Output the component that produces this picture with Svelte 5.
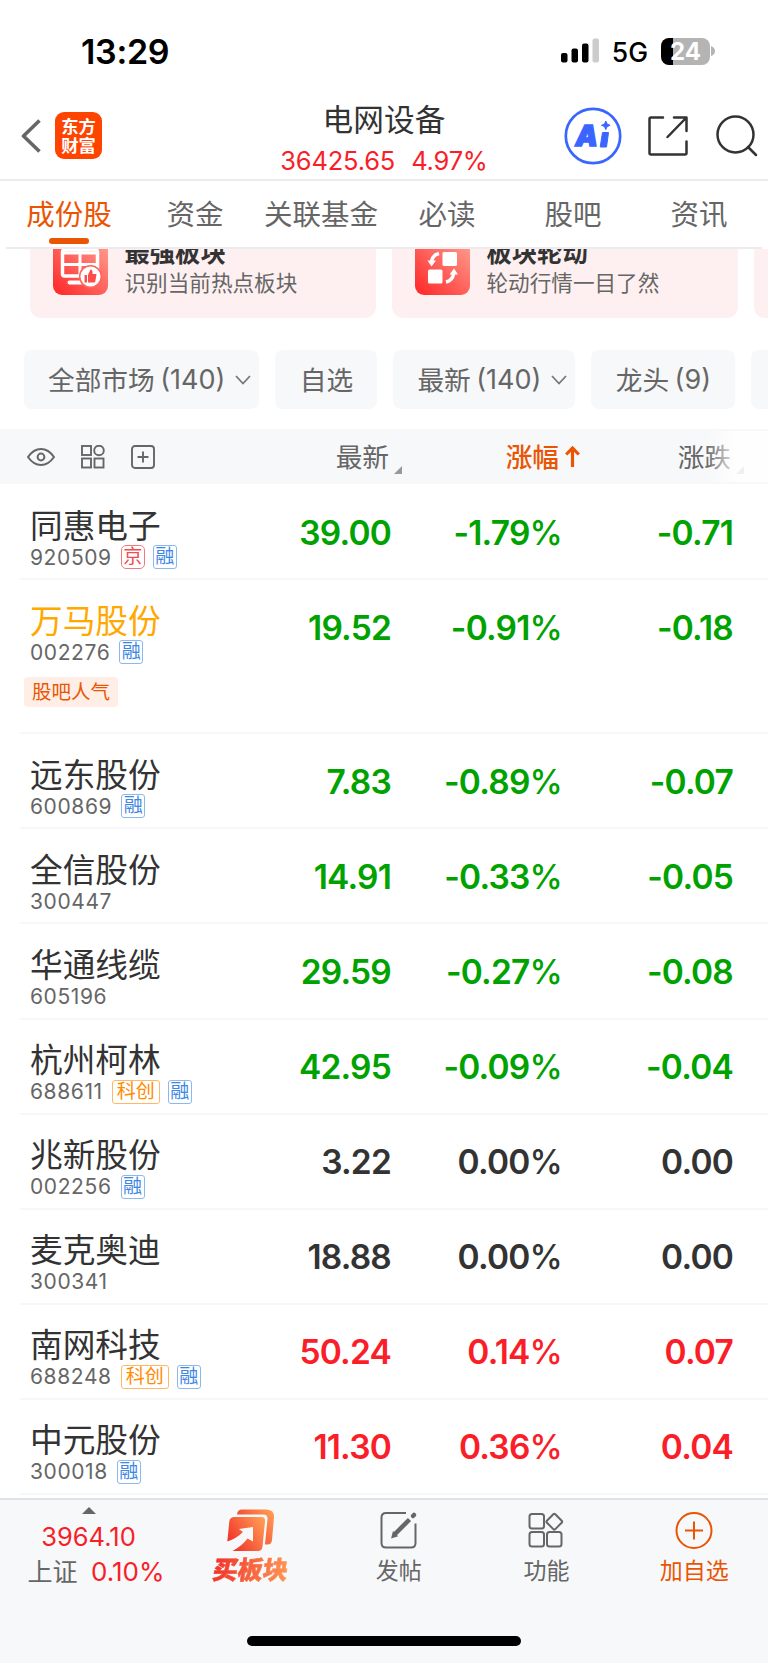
<script lang="ts">
	type Tag = { text: string; kind: 'blue' | 'red' | 'orange' };

	interface Stock {
		name: string;
		code: string;
		price: string;
		percent: string;
		change: string;
		tags: Tag[];
		hot?: string;
		own?: boolean;
	}

	const rong: Tag = { text: '融', kind: 'blue' };
	const jing: Tag = { text: '京', kind: 'red' };
	const kechuang: Tag = { text: '科创', kind: 'orange' };

	const tabs = ['成份股', '资金', '关联基金', '必读', '股吧', '资讯'];
	let activeTab = $state('成份股');

	const filters = [
		{ name: '全部市场', count: '(140)', menu: true },
		{ name: '自选', count: '', menu: false },
		{ name: '最新', count: '(140)', menu: true },
		{ name: '龙头', count: '(9)', menu: false }
	];

	const stocks: Stock[] = [
		{ name: '同惠电子', code: '920509', price: '39.00', percent: '-1.79', change: '-0.71', tags: [jing, rong] },
		{ name: '万马股份', code: '002276', price: '19.52', percent: '-0.91', change: '-0.18', tags: [rong], hot: '股吧人气', own: true },
		{ name: '远东股份', code: '600869', price: '7.83', percent: '-0.89', change: '-0.07', tags: [rong] },
		{ name: '全信股份', code: '300447', price: '14.91', percent: '-0.33', change: '-0.05', tags: [] },
		{ name: '华通线缆', code: '605196', price: '29.59', percent: '-0.27', change: '-0.08', tags: [] },
		{ name: '杭州柯林', code: '688611', price: '42.95', percent: '-0.09', change: '-0.04', tags: [kechuang, rong] },
		{ name: '兆新股份', code: '002256', price: '3.22', percent: '0.00', change: '0.00', tags: [rong] },
		{ name: '麦克奥迪', code: '300341', price: '18.88', percent: '0.00', change: '0.00', tags: [] },
		{ name: '南网科技', code: '688248', price: '50.24', percent: '0.14', change: '0.07', tags: [kechuang, rong] },
		{ name: '中元股份', code: '300018', price: '11.30', percent: '0.36', change: '0.04', tags: [rong] }
	];

	// 涨红跌绿
	function trend(change: string) {
		const value = parseFloat(change);
		if (value > 0) return 'up';
		if (value < 0) return 'down';
		return 'flat';
	}
</script>

<div class="screen">
	<div class="status">
		<span class="time">13:29</span>
		<svg class="signal" width="39" height="26" viewBox="0 0 39 26">
			<rect x="0" y="15" width="6.5" height="9.5" rx="2" />
			<rect x="10.5" y="10.5" width="6.5" height="14" rx="2" />
			<rect x="21" y="5.5" width="6.5" height="19" rx="2" />
			<rect x="31.5" y="0.5" width="6.5" height="24" rx="2" fill="#ccc" />
		</svg>
		<span class="network">5G</span>
		<span class="battery">24</span>
		<svg width="5" height="10" viewBox="0 0 5 10"><path d="M1 0q4 1.5 4 5t-4 5z" fill="#b4b4b4" /></svg>
	</div>

	<header class="nav">
		<div class="nav-left">
			<svg width="20" height="36" viewBox="0 0 20 36" fill="none" stroke="#666" stroke-width="3.6">
				<path d="M18.5 2.5L2.5 18l16 15.5" stroke-linejoin="round" />
			</svg>
			<span class="brand">东方<br />财富</span>
		</div>
		<div class="nav-title">
			<h1>电网设备</h1>
			<p><span>36425.65</span><span>4.97%</span></p>
		</div>
		<div class="nav-icons">
			<svg width="58" height="58" viewBox="0 0 58 58">
				<circle cx="29" cy="29" r="27.2" fill="none" stroke="#3a66ff" stroke-width="2.7" />
				<text x="11.500" y="39" class="ai">A</text>
				<path d="M38.5 25.5h6l-2 14.5h-6.300z" fill="#3a66ff" stroke="#3a66ff" stroke-linejoin="round" />
				<path d="M41.8 14l1.3 3 3 1.3-3 1.3-1.3 3-1.3-3-3-1.3 3-1.3z" fill="#3a66ff" stroke="#3a66ff" />
			</svg>
			<svg width="40" height="40" viewBox="0 0 40 40" fill="none" stroke="#333" stroke-width="2.5" stroke-linecap="round" stroke-linejoin="round">
				<path d="M15 1.5H3q-1.5 0-1.5 1.5v34q0 1.500 1.500 1.500h34q1.500 0 1.500-1.500V25.500M26 1.500h12.500V15M38 2L19.500 21" />
			</svg>
			<svg width="42" height="42" viewBox="0 0 42 42" fill="none" stroke="#333" stroke-width="2.5" stroke-linecap="round">
				<circle cx="19.5" cy="19.5" r="18" />
				<path d="M32 32l8 8" />
			</svg>
		</div>
	</header>

	<nav class="tabs">
		{#each tabs as tab}
			<button class:active={tab === activeTab} onclick={() => (activeTab = tab)}>{tab}</button>
		{/each}
	</nav>

	<section class="cards">
		<div class="card">
			<svg width="55" height="55" viewBox="0 0 55 55">
				<defs>
					<linearGradient id="tile" x1="0" y1="1" x2="1" y2="0">
						<stop offset="0.1" stop-color="#fe3130" />
						<stop offset="1" stop-color="#ffa193" />
					</linearGradient>
				</defs>
				<rect width="55" height="55" rx="9" fill="url(#tile)" />
				<rect x="9.5" y="10" width="35" height="26" rx="2" fill="none" stroke="#fff" stroke-width="3.5" />
				<path d="M27 10v26M10 24.5h34M10 13h34" stroke="#fff" stroke-width="3" />
				<path d="M16.5 42.5H28" stroke="#fff" stroke-width="4" stroke-linecap="round" />
				<circle cx="37.5" cy="36.5" r="10.8" fill="#fff" stroke="#ff6560" stroke-width="1.5" />
				<path d="M31.5 35h2.5v7.5h-2.500zM35 35l2.500-5.500q2.500 0 2 4.500h4l-1.200 7.500q-.3 1-1.300 1h-6z" fill="#ff4c48" />
			</svg>
			<div>
				<h2>最强板块</h2>
				<p>识别当前热点板块</p>
			</div>
		</div>
		<div class="card">
			<svg width="55" height="55" viewBox="0 0 55 55">
				<rect width="55" height="55" rx="9" fill="url(#tile)" />
				<rect x="27.5" y="12" width="14.5" height="14" rx="1.5" fill="#fff" />
				<rect x="13" y="29.5" width="14.5" height="14" rx="1.5" fill="#fff" />
				<path d="M24 13.5q-6.5 1.5-7.5 8M31 42q6.5-1.5 7.5-8" fill="none" stroke="#fff" stroke-width="3.5" />
				<path d="M12.5 20.5h8.5l-4.5 6zM34.5 34.5h8.5l-4-6z" fill="#fff" />
			</svg>
			<div>
				<h2>板块轮动</h2>
				<p>轮动行情一目了然</p>
			</div>
		</div>
		<div class="card"></div>
	</section>

	<section class="filters">
		{#each filters as filter}
			<button class="chip" class:menu={filter.menu}>
				<span>{filter.name}</span>
				{#if filter.count}<span class="count">{filter.count}</span>{/if}
				{#if filter.menu}
					<svg width="16" height="10" viewBox="0 0 16 10" fill="none" stroke="#777" stroke-width="1.8">
						<path d="M1 1l7 7.5L15 1" />
					</svg>
				{/if}
			</button>
		{/each}
		<button class="chip" aria-label="更多"></button>
	</section>

	<div class="thead">
		<div class="tools">
			<svg width="28" height="18" viewBox="0 0 28 18" fill="none" stroke="#666" stroke-width="2">
				<path d="M1 9Q6.5 1 14 1t13 8q-5.500 8-13 8T1 9z" stroke-linejoin="round" />
				<circle cx="14" cy="9" r="3.4" />
			</svg>
			<svg width="24" height="24" viewBox="0 0 24 24" fill="none" stroke="#666" stroke-width="1.9">
				<rect x="1" y="1" width="9" height="9" />
				<circle cx="18" cy="5.5" r="4.8" />
				<rect x="1" y="13.5" width="9" height="9" />
				<rect x="13.5" y="13.5" width="9" height="9" />
			</svg>
			<svg width="24" height="24" viewBox="0 0 24 24" fill="none" stroke="#666" stroke-width="1.9">
				<rect x="1" y="1" width="22" height="22" rx="3" />
				<path d="M12 6.5v11M6.500 12h11" />
			</svg>
		</div>
		<span class="th">最新<i class="corner"></i></span>
		<span class="th sorted">
			涨幅
			<svg width="15" height="22" viewBox="0 0 15 22" fill="none" stroke="#ea5504" stroke-width="3.2">
				<path d="M7.5 21V2.5M1.2 8.5L7.5 2l6.300 6.500" />
			</svg>
		</span>
		<span class="th last">涨跌<i class="corner"></i></span>
	</div>

	<main>
		{#each stocks as stock}
			<div class="row" class:tall={stock.hot}>
				<div class="stock">
					<div class="name" class:own={stock.own}>{stock.name}</div>
					<div class="code">
						<span>{stock.code}</span>
						{#each stock.tags as tag}
							<i class="tag {tag.kind}">{tag.text}</i>
						{/each}
					</div>
					{#if stock.hot}<span class="hot">{stock.hot}</span>{/if}
				</div>
				<span class="num {trend(stock.change)}">{stock.price}</span>
				<span class="num {trend(stock.change)}">{stock.percent}<span class="unit">%</span></span>
				<span class="num {trend(stock.change)}">{stock.change}</span>
			</div>
		{/each}
	</main>

	<footer>
		<div class="bar">
			<div class="index">
				<i class="caret"></i>
				<span class="point">3964.10</span>
				<span class="rate">上证<b>0.10%</b></span>
			</div>
			<div class="item">
				<svg width="48" height="43" viewBox="0 0 48 43">
					<defs>
						<linearGradient id="buy" x1="0" y1="0.8" x2="1" y2="0.2">
							<stop offset="0" stop-color="#f02d26" />
							<stop offset="1" stop-color="#ff9a55" />
						</linearGradient>
					</defs>
					<path d="M10 5.5Q10.5.5 15 .5h24q8.500 0 8 8l-2 22.500q-.4 4.500-4.500 4.500h-2.500l2.500-25.500q.3-4.500-4-4.500z" fill="url(#buy)" />
					<path d="M7.5 8h27q4 0 3.500 4.500l-2.500 25q-.5 4.500-4.500 4.500H5.500Q15 37 20.500 29.500l5.500 3V18l-14 2 4 3Q9.500 29.500.300 32.500l2-20Q2.800 8 7.500 8z" fill="url(#buy)" />
				</svg>
				<span class="buy">买板块</span>
			</div>
			<div class="item">
				<svg width="38" height="38" viewBox="0 0 38 38" fill="none" stroke="#666" stroke-width="2">
					<path d="M26 1.5H6Q1.5 1.5 1.5 6v25.500Q1.500 36 6 36h25q4.500 0 4.500-4.500V12" />
					<path d="M15 22.500L29.500 8" stroke-width="4.5" />
					<path d="M12.500 25.500l1-4 2.800 2.800z" fill="#666" />
					<path d="M33 4.500l1-1" stroke-width="4.5" stroke-linecap="round" />
				</svg>
				<span>发帖</span>
			</div>
			<div class="item">
				<svg width="36" height="36" viewBox="0 0 36 36" fill="none" stroke="#666" stroke-width="2" stroke-linejoin="round">
					<rect x="1.5" y="1.5" width="14.5" height="14.5" rx="2.5" />
					<rect x="1.5" y="19.5" width="14.5" height="14.5" rx="2.5" />
					<rect x="19" y="19.5" width="14.5" height="14.5" rx="2.5" />
					<path d="M25.3 1.8q1-1 2 0l6.4 6.4q1 1 0 2l-6.400 6.400q-1 1-2 0l-6.400-6.400q-1-1 0-2z" />
				</svg>
				<span>功能</span>
			</div>
			<div class="item add">
				<svg width="38" height="38" viewBox="0 0 38 38" fill="none" stroke="#ea5504" stroke-width="2">
					<circle cx="19" cy="19" r="17.5" />
					<path d="M19 10v18M10 19h18" />
				</svg>
				<span>加自选</span>
			</div>
		</div>
		<div class="home"></div>
	</footer>
</div>

<style>
	:global(body) {
		background: #fff;
	}

	.screen {
		display: flex;
		flex-direction: column;
		width: 768px;
		height: 1663px;
		overflow: hidden;
		font-family: 'Inter', 'Noto Sans CJK SC', sans-serif;
		color: #333;
	}

	h1,
	h2,
	p {
		margin: 0;
		font-weight: 400;
	}

	button {
		border: 0;
		padding: 0;
		background: none;
		font: inherit;
		color: inherit;
	}

	svg {
		display: block;
		flex: none;
	}

	.status {
		display: flex;
		align-items: center;
		height: 102px;
		padding: 0 53px 0 81px;
		color: #000;
	}

	.time {
		flex: 1;
		font-size: 34px;
		font-weight: 600;
		letter-spacing: -0.3px;
	}

	.network {
		margin: 1px 13px 0 12px;
		font-size: 26.5px;
		font-weight: 500;
		line-height: 30px;
	}

	.battery {
		width: 49px;
		height: 27px;
		border-radius: 8px;
		background: linear-gradient(90deg, #000 12px, #b4b4b4 12px);
		color: #fff;
		font-size: 24px;
		font-weight: 700;
		line-height: 27px;
		text-align: center;
	}

	.nav {
		display: grid;
		grid-template-columns: 240px 1fr 240px;
		height: 77px;
		border-bottom: 2px solid #ececec;
	}

	.nav-left,
	.nav-icons {
		display: flex;
		align-items: center;
		box-sizing: border-box;
		height: 77px;
		padding-bottom: 10px;
	}

	.nav-left {
		gap: 14px;
		padding-left: 21px;
	}

	.brand {
		box-sizing: border-box;
		width: 47px;
		height: 47px;
		padding-top: 5px;
		border-radius: 9px;
		background: #ff4400;
		color: #fff;
		font-size: 17.3px;
		font-weight: 700;
		line-height: 19px;
		text-align: center;
	}

	.nav-title {
		text-align: center;
	}

	.nav-title h1 {
		font-size: 30.7px;
		line-height: 35px;
	}

	.nav-title p {
		display: flex;
		justify-content: center;
		gap: 16px;
		margin-top: 9px;
		color: #f91e28;
		font-size: 25.5px;
		letter-spacing: -0.2px;
		line-height: 30px;
	}

	.nav-icons {
		gap: 26px;
		padding-left: 36px;
	}

	.nav-icons svg:nth-child(2) {
		margin-right: 2px;
	}

	.ai {
		fill: #3a66ff;
		stroke: #3a66ff;
		stroke-width: 1.5px;
		font-size: 28px;
		font-style: italic;
		font-weight: 900;
	}

	.tabs {
		display: grid;
		grid-template-columns: repeat(6, 1fr);
		height: 66px;
		margin: 0 6px;
		border-bottom: 2px solid #ececee;
		color: #666;
		font-size: 28.5px;
	}

	.tabs button {
		position: relative;
		padding-bottom: 3px;
		white-space: nowrap;
	}

	.tabs .active {
		color: #ea5504;
	}

	.tabs .active::after {
		content: '';
		position: absolute;
		left: 43px;
		bottom: 3px;
		width: 40px;
		height: 6px;
		border-radius: 3px;
		background: #ea5504;
	}

	.cards {
		display: flex;
		align-items: flex-end;
		gap: 16px;
		height: 69px;
		padding-left: 30px;
		overflow: hidden;
	}

	.card {
		box-sizing: border-box;
		display: flex;
		flex: none;
		gap: 16.5px;
		width: 346px;
		height: 100px;
		padding: 22px 0 0 23px;
		border-radius: 11px;
		background: #fef0f1;
	}

	.card h2 {
		margin-top: -2px;
		font-size: 25.3px;
		font-weight: 700;
		line-height: 30px;
	}

	.card p {
		margin-top: 1px;
		color: #666;
		font-size: 21.6px;
		line-height: 28px;
	}

	.filters {
		display: flex;
		gap: 16px;
		padding: 32px 0 20px 24px;
		overflow: hidden;
	}

	.chip {
		box-sizing: border-box;
		display: flex;
		flex: none;
		align-items: center;
		height: 59px;
		padding: 0 24.3px;
		border-radius: 8px;
		background: #f7f8fa;
		color: #666;
		font-size: 26.7px;
		line-height: 32px;
	}

	.chip.menu {
		padding: 0 8px 0 24px;
	}

	.chip .count {
		margin-left: 5.5px;
		font-size: 27px;
	}

	.chip svg {
		margin-left: 10px;
	}

	.thead {
		display: grid;
		grid-template-columns: 200px 202px 178px 164px;
		align-items: center;
		position: relative;
		height: 55px;
		background: #f7f8fa;
		color: #666;
		font-size: 26.7px;
		line-height: 32px;
	}

	.thead::after {
		content: '';
		position: absolute;
		inset: 2px 0 2px 706px;
		background: linear-gradient(90deg, #fff0, #fff 30px);
		opacity: 0.85;
	}

	.tools {
		display: flex;
		align-items: center;
		gap: 26px;
		padding-left: 27px;
	}

	.th {
		display: flex;
		align-items: center;
		justify-content: flex-end;
	}

	.sorted {
		gap: 6px;
		color: #ea5504;
		font-weight: 500;
	}

	.corner {
		align-self: flex-end;
		margin: 0 0 -1px 5px;
		border-bottom: 8px solid #999;
		border-left: 8px solid transparent;
	}

	main {
		flex: 1;
		padding-top: 1px;
		overflow: hidden;
	}

	.row {
		box-sizing: border-box;
		display: grid;
		grid-template-columns: 200px 161px 171px 171px;
		height: 95.1px;
		margin-left: 20px;
		padding: 23.500px 0 0 10px;
		border-bottom: 2px solid #f7f7f9;
	}

	.row.tall {
		height: 154.2px;
	}

	.name {
		font-size: 32.7px;
		line-height: 34px;
	}

	.own {
		color: #ffa800;
	}

	.code {
		display: flex;
		align-items: center;
		gap: 8px;
		height: 29px;
		color: #666;
		font-size: 21px;
		letter-spacing: 0.6px;
	}

	.code span {
		margin-right: 1px;
	}

	.tag {
		box-sizing: border-box;
		height: 24px;
		padding: 0 1.5px;
		border: 1.5px solid;
		border-radius: 3px;
		font-size: 19px;
		font-style: normal;
		letter-spacing: 0;
		line-height: 21px;
	}

	.blue {
		border-color: #8db8ef;
		color: #3d87e4;
	}

	.red {
		border-color: #f5797c;
		border-radius: 5px;
		color: #f04d50;
	}

	.orange {
		padding: 0 4px;
		border-color: #ffb866;
		color: #ff8c00;
	}

	.hot {
		display: inline-block;
		margin: 10px 0 0 -6px;
		padding: 0 8px;
		border-radius: 4px;
		background: #feeee6;
		color: #ea5504;
		font-size: 19.5px;
		line-height: 30px;
	}

	.num {
		padding-top: 4px;
		font-size: 33.5px;
		font-weight: 600;
		letter-spacing: -0.8px;
		line-height: 40px;
		text-align: right;
	}

	.unit {
		font-weight: 500;
	}

	.up {
		color: #f91e28;
	}

	.down {
		color: #00a200;
	}

	footer {
		box-sizing: border-box;
		height: 165px;
		border-top: 2px solid #e1e2e5;
		background: #f7f8fa;
	}

	.bar {
		display: grid;
		grid-template-columns: 177px repeat(4, 147.75px);
		height: 136px;
	}

	.index,
	.item {
		display: flex;
		flex-direction: column;
		align-items: center;
		color: #666;
		font-size: 23px;
		line-height: 30px;
	}

	.item svg {
		height: 43px;
		margin: 8.5px 0 4.5px;
	}

	.add {
		color: #ea5504;
	}

	.caret {
		margin: 7px 0 0;
		border: 7px solid transparent;
		border-top: 0;
		border-bottom-color: #666;
	}

	.point {
		margin-top: 8px;
		color: #f91e28;
		font-size: 25.5px;
	}

	.rate {
		margin: 5px 0 0 15px;
		font-size: 25px;
	}

	.rate b {
		margin-left: 13.5px;
		color: #f91e28;
		font-size: 26px;
		font-weight: 400;
	}

	.buy {
		padding: 0 4px;
		background: linear-gradient(90deg, #f02d26, #ff9a55);
		background-clip: text;
		-webkit-text-stroke: 0.6px transparent;
		color: transparent;
		font-size: 25px;
		font-weight: 900;
		line-height: 28px;
		transform: skewX(-8deg);
	}

	.home {
		width: 274px;
		height: 10px;
		margin: 0 auto;
		border-radius: 5px;
		background: #000;
	}
</style>
